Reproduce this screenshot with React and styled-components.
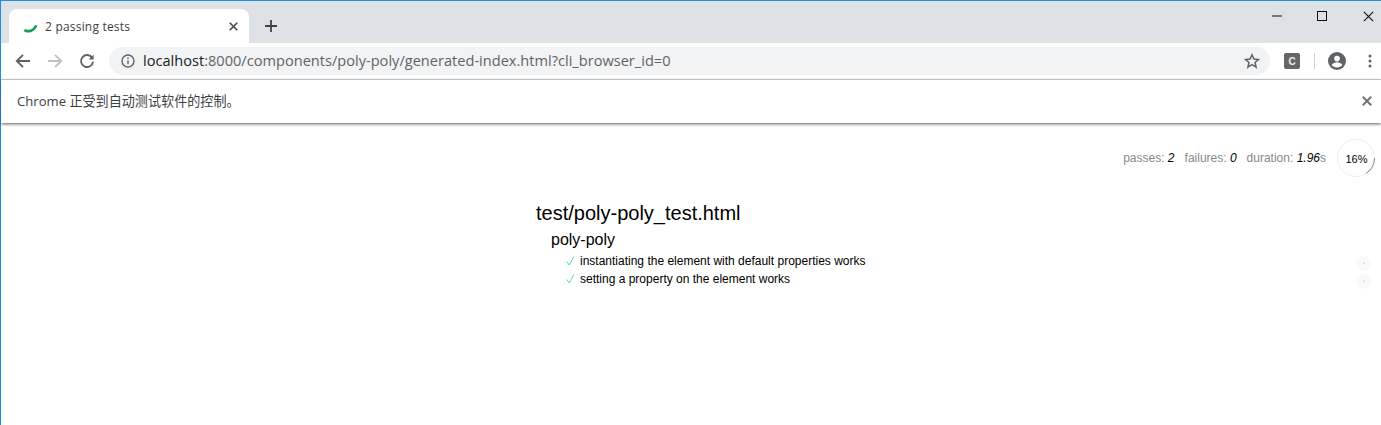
import styled, { createGlobalStyle } from 'styled-components';

const GlobalStyle = createGlobalStyle`
  html, body {
    margin: 0;
    padding: 0;
    height: 100%;
    background: #fff;
    overflow: hidden;
  }
  #root {
    height: 100%;
  }
`;

const Window = styled.div`
  height: 425px;
  box-sizing: border-box;
  border-top: 1px solid #1a8fe6;
  border-left: 1px solid #1a8fe6;
  display: flex;
  flex-direction: column;
  font-family: "Liberation Sans", Arial, sans-serif;
  background: #fff;
`;

const TabStrip = styled.div`
  height: 42px;
  flex: none;
  background: #dee1e6;
  display: flex;
  align-items: flex-end;
  padding-left: 8px;
`;

const Tab = styled.div`
  width: 240px;
  height: 34px;
  box-sizing: border-box;
  background: #fff;
  border-radius: 8px 8px 0 0;
  display: flex;
  align-items: center;
  padding: 0 11px 0 15px;
  color: #3c4043;
  font-family: "Open Sans", "Noto Sans", sans-serif;
  font-size: 12px;
`;

const TabTitle = styled.span`
  flex: 1;
  margin-left: 5px;
  letter-spacing: 0.2px;
`;

const NewTab = styled.div`
  width: 22px;
  height: 22px;
  margin: 0 0 6px 11px;
  display: flex;
  align-items: center;
  justify-content: center;
`;

const WindowButtons = styled.div`
  margin-left: auto;
  align-self: flex-start;
  display: flex;
  align-items: center;
`;

const WindowButton = styled.div`
  width: ${(p) => p.$width || 45}px;
  height: 30px;
  box-sizing: border-box;
  padding-left: ${(p) => p.$inset || 0}px;
  display: flex;
  align-items: center;
  justify-content: ${(p) => (p.$inset ? 'flex-start' : 'center')};
`;

const Toolbar = styled.div`
  height: 37px;
  flex: none;
  background: #fff;
  box-sizing: border-box;
  border-bottom: 1px solid #d6d7d9;
  display: flex;
  align-items: center;
  padding: 0 4px 0 12px;
`;

const NavButton = styled.div`
  width: 20px;
  height: 20px;
  margin-right: 12px;
  display: flex;
  align-items: center;
  justify-content: center;
`;

const Omnibox = styled.div`
  width: 1161px;
  height: 28px;
  background: #f1f3f4;
  border-radius: 14px;
  box-sizing: border-box;
  display: flex;
  align-items: center;
  padding: 0 10px 0 12px;
  font-family: "Open Sans", "Noto Sans", sans-serif;
  font-size: 14.6px;
  color: #5f6368;
`;

const Url = styled.span`
  flex: 1;
  margin-left: 8px;
  padding-bottom: 2px;
  white-space: nowrap;
`;

const Host = styled.span`
  color: #202124;
`;

const ExtensionBadge = styled.div`
  width: 16px;
  height: 16px;
  margin-left: 14px;
  border-radius: 2px;
  background: #666;
  color: #eee;
  font-size: 10px;
  font-weight: 700;
  display: flex;
  align-items: center;
  justify-content: center;
`;

const ToolbarDivider = styled.div`
  width: 1px;
  height: 16px;
  margin: 0 13px 0 14px;
  background: #d0d2d5;
`;

const MenuDots = styled.svg`
  width: 4px;
  height: 14px;
  margin-left: 22px;
`;

const InfoBar = styled.div`
  height: 43px;
  flex: none;
  background: #fff;
  box-shadow: 0 1px 3px rgba(50, 50, 50, 0.8);
  position: relative;
  display: flex;
  align-items: center;
  justify-content: space-between;
  padding: 0 9px 2px 16px;
  box-sizing: border-box;
  font-family: "Open Sans", "Noto Sans CJK SC", sans-serif;
  font-size: 13.1px;
  color: #3c4043;
`;

const Page = styled.main`
  flex: 1;
  padding: 16px 5px 0 0;
  background: #fff;
`;

const StatsRow = styled.div`
  display: flex;
  justify-content: flex-end;
  align-items: center;
  height: 38px;
  font-size: 12px;
  color: #888;
`;

const Stat = styled.span`
  margin-right: 10px;
`;

const StatValue = styled.em`
  color: #000;
`;

const Gauge = styled.div`
  position: relative;
  width: 40px;
  height: 40px;
  display: flex;
  align-items: center;
  justify-content: center;
  color: #000;
  font-size: 11px;
  padding: 2px 0 0 1px;
  box-sizing: border-box;
`;

const GaugeRing = styled.svg`
  position: absolute;
  inset: 0;
`;

const Report = styled.section`
  margin-top: 25px;
  padding-left: 535px;
  color: #000;
`;

const SuiteFile = styled.h1`
  margin: 0;
  font-size: 20px;
  font-weight: 400;
  line-height: 23px;
`;

const SuiteName = styled.h2`
  margin: 4px 0 0 15px;
  font-size: 16px;
  font-weight: 400;
  line-height: 21px;
`;

const TestRow = styled.div`
  display: flex;
  align-items: center;
  justify-content: space-between;
  margin: ${(p) => (p.$first ? 2 : 0)}px 5px 0 30px;
  height: 18px;
  font-size: 12px;
`;

const TestLabel = styled.span`
  display: flex;
  align-items: center;
`;

const Check = styled.svg`
  width: 14px;
  height: 12px;
  flex: none;
`;

const DurationDot = styled.span`
  width: 15px;
  height: 15px;
  margin-top: 4px;
  border-radius: 50%;
  background: #fafafa;
  color: #d4d4d4;
  font-size: 6px;
  display: flex;
  align-items: center;
  justify-content: center;
`;

const Spinner = () => (
  <svg width="16" height="16" viewBox="0 0 16 16">
    <path d="M1.500 12.600c3.600 1.200 8 .2 10.200-4.200" fill="none" stroke="#14a05a" strokeWidth="2.800" strokeLinecap="round" />
  </svg>
);

const CloseIcon = ({ size = 10, color = '#5f6368', width = 1.8 }) => (
  <svg width={size} height={size} viewBox="0 0 10 10">
    <path d="M.8.8l8.4 8.4M9.2.8L.8 9.2" stroke={color} strokeWidth={width} fill="none" />
  </svg>
);

const tests = [
  'instantiating the element with default properties works',
  'setting a property on the element works',
];

const App = () => (
  <>
    <GlobalStyle />
    <Window>
      <TabStrip>
        <Tab>
          <Spinner />
          <TabTitle>2 passing tests</TabTitle>
          <CloseIcon size={9} color="#45484c" />
        </Tab>
        <NewTab>
          <svg width="12" height="12" viewBox="0 0 12 12">
            <path d="M6 0v12M0 6h12" stroke="#3c4043" strokeWidth="1.800" />
          </svg>
        </NewTab>
        <WindowButtons>
          <WindowButton>
            <svg width="10" height="2" viewBox="0 0 10 2"><path d="M0 1h10" stroke="#111" /></svg>
          </WindowButton>
          <WindowButton>
            <svg width="10" height="10" viewBox="0 0 10 10"><rect x=".5" y=".5" width="9" height="9" fill="none" stroke="#111" /></svg>
          </WindowButton>
          <WindowButton $width={37} $inset={19}>
            <CloseIcon size={11} color="#111" width={1} />
          </WindowButton>
        </WindowButtons>
      </TabStrip>
      <Toolbar>
        <NavButton>
          <svg width="16" height="16" viewBox="0 0 16 16">
            <path d="M15 8H2M8 1.800L1.800 8 8 14.200" fill="none" stroke="#5f6368" strokeWidth="1.900" />
          </svg>
        </NavButton>
        <NavButton>
          <svg width="16" height="16" viewBox="0 0 16 16">
            <path d="M1 8h13M8 1.800L14.200 8 8 14.200" fill="none" stroke="#bdc1c6" strokeWidth="1.900" />
          </svg>
        </NavButton>
        <NavButton>
          <svg width="16" height="16" viewBox="0 0 16 16">
            <path d="M13.200 5A6 6 0 1 0 14 8.600" fill="none" stroke="#5f6368" strokeWidth="1.900" />
            <path d="M14.600 1.600v5h-5z" fill="#5f6368" />
          </svg>
        </NavButton>
        <Omnibox>
          <svg width="14" height="14" viewBox="0 0 14 14">
            <circle cx="7" cy="7" r="6" fill="none" stroke="#5f6368" strokeWidth="1.400" />
            <path d="M7 6.200v4M7 3.600v1.500" stroke="#5f6368" strokeWidth="1.400" />
          </svg>
          <Url><Host>localhost</Host>:8000/components/poly-poly/generated-index.html?cli_browser_id=0</Url>
          <svg width="16" height="16" viewBox="0 0 16 16">
            <path d="M8 1.800l1.900 4.300 4.600.4-3.500 3 1.100 4.600L8 11.700l-4.100 2.400L5 9.500l-3.500-3 4.600-.4z" fill="none" stroke="#5f6368" strokeWidth="1.500" />
          </svg>
        </Omnibox>
        <ExtensionBadge>C</ExtensionBadge>
        <ToolbarDivider />
        <svg width="18" height="18" viewBox="0 0 18 18">
          <circle cx="9" cy="9" r="9" fill="#5f6368" />
          <circle cx="9" cy="6.600" r="2.800" fill="#fff" />
          <path d="M3.600 13c1.200-2 3.400-2.800 5.400-2.800s4.200.8 5.400 2.800c-1.200 1.500-3.200 2.500-5.400 2.500s-4.200-1-5.400-2.500z" fill="#fff" />
        </svg>
        <MenuDots viewBox="0 0 4 14">
          <circle cx="2" cy="2" r="1.500" fill="#5f6368" />
          <circle cx="2" cy="7" r="1.500" fill="#5f6368" />
          <circle cx="2" cy="12" r="1.500" fill="#5f6368" />
        </MenuDots>
      </Toolbar>
      <InfoBar>
        <span>Chrome 正受到自动测试软件的控制。</span>
        <CloseIcon size={10} color="#6f7276" width={2} />
      </InfoBar>
      <Page>
        <StatsRow>
          <Stat>passes: <StatValue>2</StatValue></Stat>
          <Stat>failures: <StatValue>0</StatValue></Stat>
          <Stat>duration: <StatValue>1.96</StatValue>s</Stat>
          <Gauge>
            <GaugeRing viewBox="0 0 40 40">
              <circle cx="20" cy="20" r="18.500" fill="none" stroke="#eee" />
              <path d="M38.500 20A18.500 18.500 0 0 1 30 35.500" fill="none" stroke="#888" />
            </GaugeRing>
            16%
          </Gauge>
        </StatsRow>
        <Report>
          <SuiteFile>test/poly-poly_test.html</SuiteFile>
          <SuiteName>poly-poly</SuiteName>
          {tests.map((name, index) => (
            <TestRow key={name} $first={index === 0}>
              <TestLabel>
                <Check viewBox="0 0 14 12">
                  <path d="M.8 6.500l2.400 3.500L8 1.500" fill="none" stroke="#4fdcc4" strokeWidth="1" />
                </Check>
                {name}
              </TestLabel>
              <DurationDot>▪</DurationDot>
            </TestRow>
          ))}
        </Report>
      </Page>
    </Window>
  </>
);

export default App;
